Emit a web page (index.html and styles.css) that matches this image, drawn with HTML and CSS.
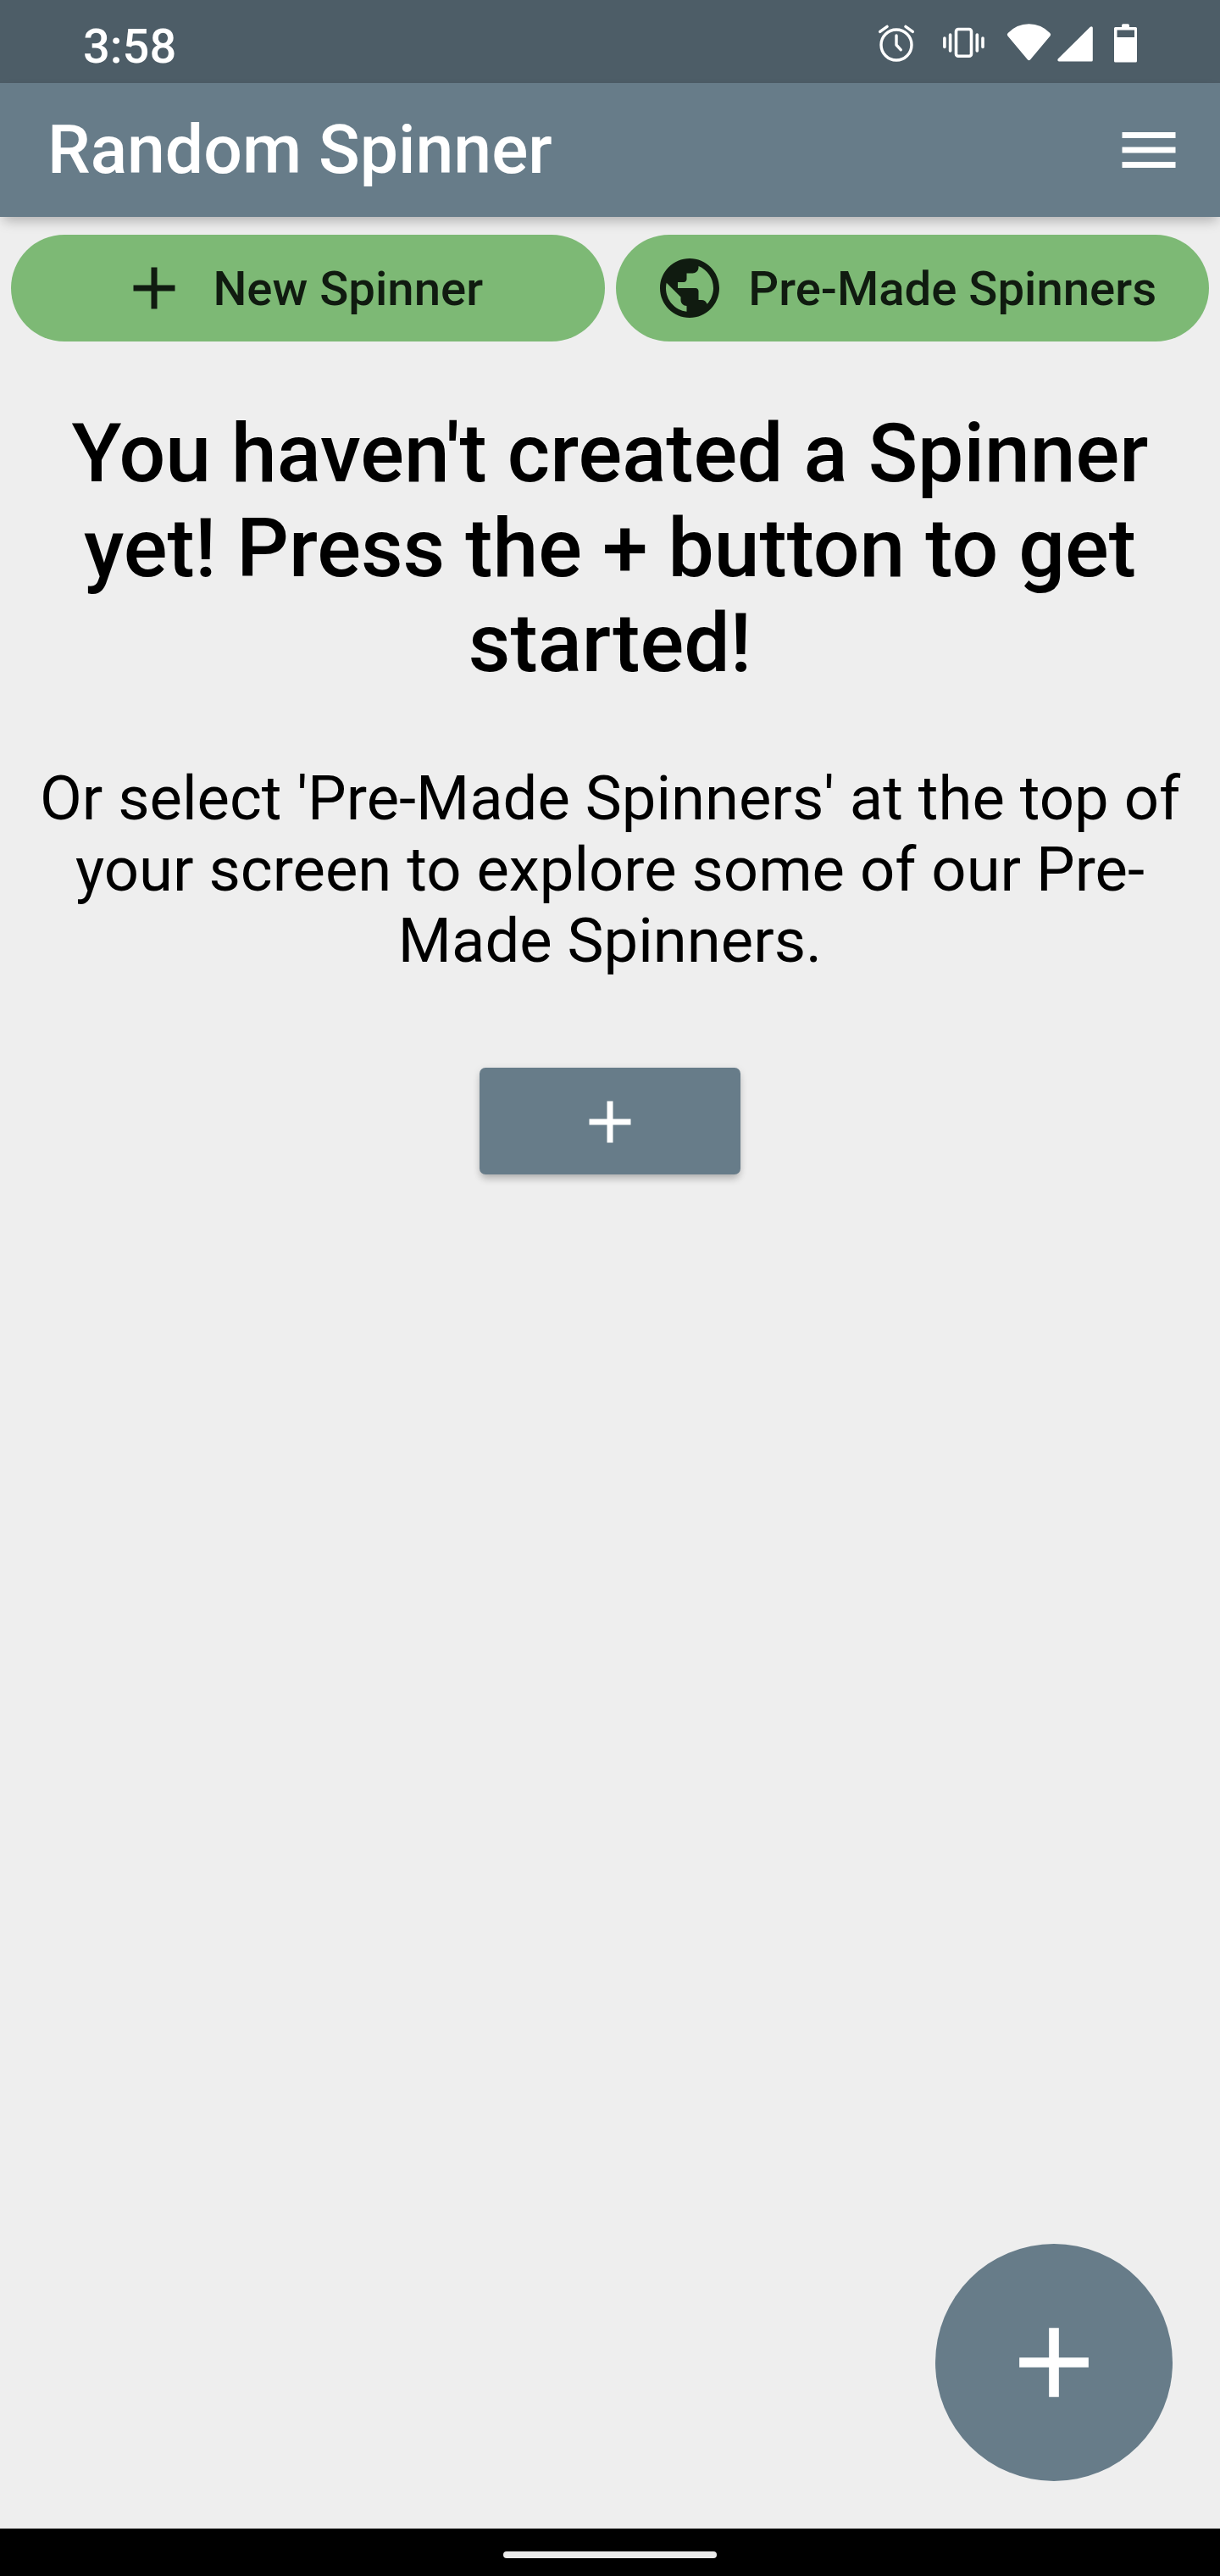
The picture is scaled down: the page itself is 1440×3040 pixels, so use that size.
FILE: index.html
```html
<!DOCTYPE html>
<html lang="en">
<head>
<meta charset="utf-8">
<title>Random Spinner</title>
<link rel="stylesheet" href="styles.css">
</head>
<body>
<div class="app">
  <div class="status-bar">
    <span class="clock">3:58</span>
    <div class="status-icons">
      <svg class="alarm" width="48" height="98" viewBox="1034 0 48 98" fill="none" stroke="#fff" stroke-width="3.4" stroke-linecap="round" stroke-linejoin="round">
        <circle cx="1058" cy="53" r="18"/>
        <path d="M1058 42v11l5.3 5.8M1038.7 37.4l8.4-6M1077.3 37.4l-8.4-6"/>
      </svg>
      <svg class="vibrate" width="55" height="98" viewBox="1110 0 55 98" fill="none" stroke="#fff" stroke-width="3.6" stroke-linecap="round">
        <rect x="1128.5" y="34.5" width="18" height="31.7" rx="2.5"/>
        <path d="M1121.6 41v19M1114.9 45v10.5M1153.3 41v19M1160 45v10.5"/>
      </svg>
      <svg class="wifi" width="53" height="98" viewBox="1188 0 53 98" fill="#fff">
        <path d="M1189.3 42.2q-1.2-1.7.4-3.2Q1200 28.2 1214.5 28.2T1239.300 39q1.600 1.500.4 3.200L1216 70.500q-1.500 1.500-3 0Z"/>
      </svg>
      <svg class="signal" width="44" height="98" viewBox="1247 0 44 98" fill="#fff">
        <path d="M1250 72.500q-2.500-.4-1.300-2.900L1286.800 31.800q2.500-1.500 3 1V71q0 1.500-1.500 1.500Z"/>
      </svg>
      <svg class="battery" width="31" height="98" viewBox="1313 0 31 98" fill="#fff">
        <path fill-rule="evenodd" d="M1316.500 32h7.500v-2q0-1.700 1.700-1.700h5.600q1.700 0 1.700 1.700v2h7.500q1.500 0 1.500 1.500V72q0 1.500-1.500 1.500h-24q-1.500 0-1.500-1.500V33.500q0-1.500 1.500-1.500ZM1318.500 35.500V44h20.500V35.500Z"/>
      </svg>
    </div>
  </div>
  <header class="toolbar">
    <h1 class="title">Random Spinner</h1>
    <svg class="menu" width="84" height="84" viewBox="0 0 24 24" fill="#fff"><path d="M3 18h18v-2H3v2zm0-5h18v-2H3v2zm0-7v2h18V6H3z"/></svg>
  </header>
  <main class="content">
    <div class="actions">
      <button class="pill">
        <svg width="84" height="84" viewBox="0 0 24 24" fill="currentColor"><path d="M19 13h-6v6h-2v-6H5v-2h6V5h2v6h6v2z"/></svg>
        <span class="label">New Spinner</span>
      </button>
      <button class="pill">
        <svg width="84" height="84" viewBox="0 0 24 24" fill="currentColor"><path d="M12 2C6.480 2 2 6.480 2 12s4.480 10 10 10 10-4.480 10-10S17.520 2 12 2zm-1 17.930c-3.950-.49-7-3.850-7-7.930 0-.62.08-1.210.21-1.790L9 15v1c0 1.100.9 2 2 2v1.930zm6.900-2.540c-.26-.81-1-1.390-1.900-1.390h-1v-3c0-.55-.45-1-1-1H8v-2h2c.55 0 1-.45 1-1V7h2c1.100 0 2-.9 2-2v-.41c2.930 1.190 5 4.060 5 7.410 0 2.080-.8 3.970-2.100 5.390z"/></svg>
        <span class="label">Pre-Made Spinners</span>
      </button>
    </div>
    <h2 class="heading">You haven't created a Spinner yet! Press the + button to get started!</h2>
    <p class="hint">Or select 'Pre-Made Spinners' at the top of your screen to explore some of our Pre-Made Spinners.</p>
    <button class="add" aria-label="Add">
      <svg width="84" height="84" viewBox="0 0 24 24" fill="#fff"><path d="M19 13h-6v6h-2v-6H5v-2h6V5h2v6h6v2z"/></svg>
    </button>
    <button class="fab" aria-label="Add spinner">
      <svg width="140" height="140" viewBox="0 0 24 24" fill="#fff"><path d="M19 13h-6v6h-2v-6H5v-2h6V5h2v6h6v2z"/></svg>
    </button>
  </main>
  <div class="nav-bar"><div class="handle"></div></div>
</div>
</body>
</html>
```
FILE: styles.css
```css
* { box-sizing: border-box; }
body { margin: 0; background: #eee; font-family: Roboto, "Liberation Sans", sans-serif; }
svg { display: block; flex: none; }
button { border: 0; padding: 0; font: inherit; color: inherit; }

.app { display: flex; flex-direction: column; width: 1440px; height: 3040px; overflow: hidden; }

.status-bar {
  display: flex; align-items: center; justify-content: space-between;
  height: 98px; padding: 0 96px 0 98px; background: #4d5d67; color: #fff;
}
.clock { padding-top: 11px; font-size: 56px; line-height: 66px; font-weight: 500; }
.status-icons { display: flex; }
.vibrate { margin-left: 28px; }
.wifi { margin-left: 23px; }
.signal { margin-left: 6px; }
.battery { margin-left: 22px; }

.toolbar {
  display: flex; align-items: center; justify-content: space-between;
  height: 157.500px; padding: 0 42px 0 56px; background: #677c89; color: #fff;
  box-shadow: 0 7px 14px -3.5px rgba(0, 0, 0, .28);
}
.title { margin: 0; font-size: 80.5px; line-height: 94px; font-weight: 500; }

.content { position: relative; flex: 1; display: flex; flex-direction: column; align-items: center; padding: 21px 13px 0; }
.actions { display: flex; gap: 13px; width: 100%; }
.pill {
  flex: 1; display: flex; align-items: center; justify-content: center; gap: 27px;
  height: 126px; padding-right: 16px; border-radius: 63px;
  background: #7db975; color: #101b10; font-size: 56.3px; font-weight: 500; white-space: nowrap;
}
.label { padding-top: 2px; line-height: 66px; }
.heading { margin: 76.500px 0 0; font-size: 96.6px; line-height: 112px; font-weight: 500; text-align: center; color: #000; }
.hint { margin: 86px 0 0; padding: 0 15px; font-size: 72.4px; line-height: 84px; text-align: center; color: #000; }
.add {
  display: flex; align-items: center; justify-content: center;
  width: 308px; height: 126px; margin-top: 107px; padding-top: 2px; border-radius: 7px; background: #677c89;
  box-shadow: 0 7px 10px -2px rgba(0, 0, 0, .2), 0 2px 10px rgba(0, 0, 0, .1);
}
.fab {
  position: absolute; right: 56px; bottom: 56px;
  display: flex; align-items: center; justify-content: center;
  width: 280px; height: 280px; border-radius: 50%; background: #677c89;
}

.nav-bar { display: flex; align-items: center; justify-content: center; height: 56px; padding-top: 6px; background: #000; }
.handle { width: 252px; height: 8px; border-radius: 4px; background: #ebebeb; }
```
